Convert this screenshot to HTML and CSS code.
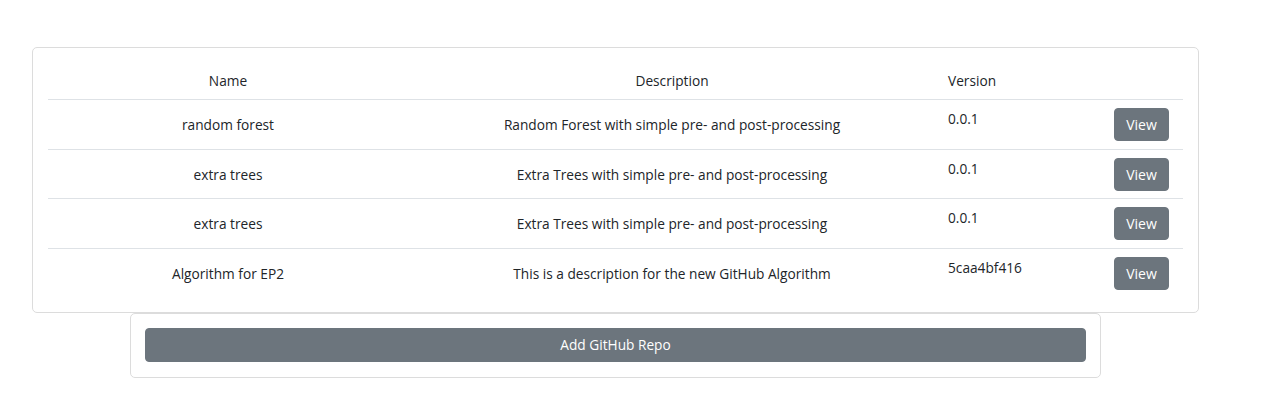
FILE: index.html
```html
<!DOCTYPE html>
<html lang="en">
<head>
<meta charset="utf-8">
<title>Algorithms</title>
<link rel="stylesheet" href="styles.css">
</head>
<body>
<div class="page">
  <div class="card card-list">
    <table class="algo-table">
      <colgroup>
        <col class="c-name">
        <col class="c-desc">
        <col class="c-ver">
        <col class="c-act">
      </colgroup>
      <thead>
        <tr>
          <th class="center">Name</th>
          <th class="center">Description</th>
          <th class="left">Version</th>
          <th></th>
        </tr>
      </thead>
      <tbody>
        <tr>
          <td class="center">random forest</td>
          <td class="center">Random Forest with simple pre- and post-processing</td>
          <td class="left top">0.0.1</td>
          <td class="center"><button class="btn">View</button></td>
        </tr>
        <tr>
          <td class="center">extra trees</td>
          <td class="center">Extra Trees with simple pre- and post-processing</td>
          <td class="left top">0.0.1</td>
          <td class="center"><button class="btn">View</button></td>
        </tr>
        <tr>
          <td class="center">extra trees</td>
          <td class="center">Extra Trees with simple pre- and post-processing</td>
          <td class="left top">0.0.1</td>
          <td class="center"><button class="btn">View</button></td>
        </tr>
        <tr>
          <td class="center">Algorithm for EP2</td>
          <td class="center">This is a description for the new GitHub Algorithm</td>
          <td class="left top">5caa4bf416</td>
          <td class="center"><button class="btn">View</button></td>
        </tr>
      </tbody>
    </table>
  </div>
  <div class="card card-add">
    <button class="btn btn-block">Add GitHub Repo</button>
  </div>
</div>
</body>
</html>
```
FILE: styles.css
```css
html, body {
  margin: 0;
  padding: 0;
  background: #fff;
}

body {
  font-family: "Open Sans", "Noto Sans", sans-serif;
  font-size: 13.7px;
  line-height: 21px;
  color: #212529;
}

.page {
  width: 1167px;
  margin-left: 32px;
  padding-top: 47px;
}

.card {
  border: 1px solid #dcdcdc;
  border-radius: 5px;
  background: #fff;
}

.card-list {
  padding: 14px 15px 14.5px;
}

.algo-table {
  width: 100%;
  border-collapse: collapse;
  table-layout: fixed;
}

.c-name { width: 360px; }
.c-desc { width: 528px; }
.c-ver { width: 164px; }
.c-act { width: 83px; }

.algo-table th,
.algo-table td {
  padding: 7.85px 12px;
  font-weight: 400;
  vertical-align: middle;
  white-space: nowrap;
}

.algo-table thead th {
  padding: 8px 12px;
}

.algo-table thead tr,
.algo-table tbody tr {
  border-bottom: 1px solid #dee2e6;
}

.algo-table tbody tr:last-child {
  border-bottom: none;
}

.algo-table td.top {
  vertical-align: top;
}

.center { text-align: center; }
.left { text-align: left; }

.btn {
  font-family: inherit;
  font-size: 14px;
  line-height: 21px;
  color: #fff;
  background: #6c757d;
  border: 1px solid #6c757d;
  border-radius: 4px;
  padding: 5px 11px;
  cursor: pointer;
}

.card-add {
  width: 971px;
  box-sizing: border-box;
  margin: 0 0 0 98px;
  padding: 14px 14px 15px;
}

.btn-block {
  display: block;
  width: 100%;
  padding: 5px 12px;
  line-height: 22px;
  font-size: 13.7px;
}
```
